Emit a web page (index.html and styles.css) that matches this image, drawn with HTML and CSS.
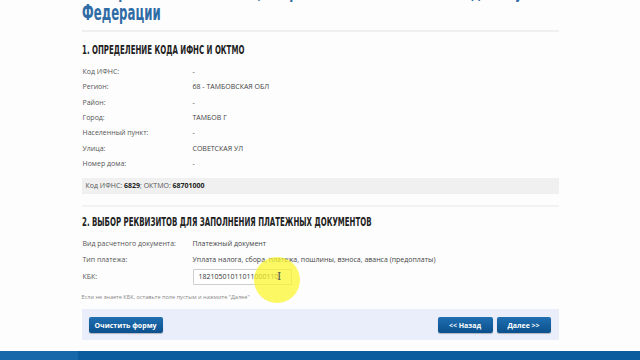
FILE: index.html
```html
<!DOCTYPE html>
<html>
<head>
	<meta charset="UTF-8">
	<title>Заполнение платежных документов</title>
	<link rel="stylesheet" href="styles.css">
</head>
<body>
	<div class="page">
		<h1 class="title"><span class="narrow">на перечисление налогов, сборов и иных платежей в бюджетную систему Российской<br>Федерации</span></h1>

		<div class="section">
			<h2 class="sec-head"><span class="narrow">1. Определение кода ИФНС и ОКТМО</span></h2>
			<div class="rows">
				<span class="lbl">Код ИФНС:</span><span class="val">-</span>
				<span class="lbl">Регион:</span><span class="val">68 - ТАМБОВСКАЯ ОБЛ</span>
				<span class="lbl">Район:</span><span class="val">-</span>
				<span class="lbl">Город:</span><span class="val">ТАМБОВ Г</span>
				<span class="lbl">Населенный пункт:</span><span class="val">-</span>
				<span class="lbl">Улица:</span><span class="val">СОВЕТСКАЯ УЛ</span>
				<span class="lbl">Номер дома:</span><span class="val">-</span>
			</div>
			<div class="summary">Код ИФНС: <b>6829</b>; ОКТМО: <b>68701000</b></div>
		</div>

		<div class="section section-2">
			<h2 class="sec-head"><span class="narrow">2. Выбор реквизитов для заполнения платежных документов</span></h2>
			<div class="rows">
				<span class="lbl">Вид расчетного документа:</span><span class="val">Платежный документ</span>
				<span class="lbl">Тип платежа:</span><span class="val">Уплата налога, сбора, платежа, пошлины, взноса, аванса (предоплаты)</span>
				<span class="lbl">КБК:</span><span class="val"><input class="kbk" type="text" value="18210501011011000110"></span>
			</div>
			<p class="hint">Если не знаете КБК, оставьте поле пустым и нажмите "Далее"</p>
		</div>

		<div class="actions">
			<button class="btn btn-clear">Очистить форму</button>
			<span class="spacer"></span>
			<button class="btn btn-back">&lt;&lt; Назад</button>
			<button class="btn btn-next">Далее &gt;&gt;</button>
		</div>
	</div>
	<div class="footer"><span class="footer-left"></span></div>

	<div class="cursor-spot"><span class="ibeam">I</span></div>
</body>
</html>
```

FILE: styles.css
```css
html, body {margin:0; padding:0;}
body {position:relative; height:360px; overflow:hidden; background:#fdfdfd; font-family:"Open Sans", "Liberation Sans", sans-serif; color:#555;}
.page {width:477px; margin:0 auto;}
.narrow {display:inline-block; transform:scaleX(.585); transform-origin:0 0; white-space:nowrap;}

.title {margin:-20px 0 0; padding-bottom:6px; border-bottom:2px solid #f0f0f0; font:bold 21px/22px "DejaVu Sans", sans-serif; color:#2f6ca5; overflow:hidden;}
	.title .narrow {transform:scaleX(.56);}

.section {border-bottom:2px solid #f2f2f2; padding-bottom:11px;}
	.sec-head {margin:0; padding:10px 0 6px; font:bold 12px/16px "DejaVu Sans", sans-serif; color:#222; text-transform:uppercase;}
	.rows {display:grid; grid-template-columns:110px 1fr; grid-auto-rows:15.3px; align-items:center; padding-left:1px; font-size:7px;}
	.rows .val {color:#444;}
	.summary {margin-top:7px; padding:0 4px; line-height:16px; background:#f0f0f0; font-size:7px; color:#555;}
	.summary b {color:#222;}

.section-2 {border-bottom:0; padding-bottom:0;}
	.section-2 .sec-head {padding-top:7px;}
	.section-2 .rows {grid-auto-rows:15.5px 15.5px 19px;}
.kbk {box-sizing:border-box; width:99px; height:16px; padding:0 5px; border:1px solid #cfcfcf; border-radius:1px; background:#fff; font:7px "Open Sans", "Liberation Sans", sans-serif; color:#333;}
.hint {margin:7px 0 0; font-size:5.6px; line-height:8px; color:#888;}

.actions {display:flex; gap:4px; align-items:center; margin-top:8px; padding:8px 8px 7px 7px; background:#e9eefa;}
	.spacer {flex:1;}
	.btn {height:16px; padding:0; border:0; border-radius:2px; background:linear-gradient(#1f6fb1, #0c508d); box-shadow:0 1px 1px rgba(0,0,0,.25); font:bold 7px "Open Sans", "Liberation Sans", sans-serif; color:#fff;}
	.btn-clear {width:74px;}
	.btn-back {width:55px;}
	.btn-next {width:54px;}

.footer {position:absolute; left:0; right:0; top:351px; height:9px; background:#0a5c9e;}
	.footer-left {display:block; width:78px; height:100%; background:#1668aa;}

/* подсветка курсора */
.cursor-spot {position:absolute; left:254px; top:257px; width:46px; height:46px; border-radius:50%; background:rgba(250,245,40,.72);}
	.ibeam {position:absolute; left:23px; top:13px; font:11px "DejaVu Serif", serif; color:#555;}
```
